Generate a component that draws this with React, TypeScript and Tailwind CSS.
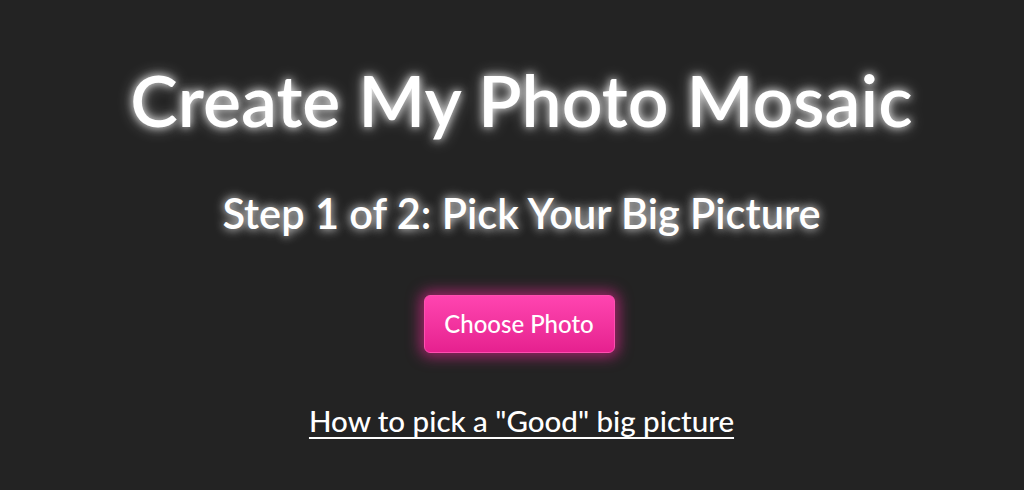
export default function App() {
  return (
    <div className="min-h-screen bg-[#232323] font-['Lato',sans-serif] text-white flex flex-col items-center pl-[19px]">
      <h1 className="mt-[55px] text-[71.6px] leading-[88px] font-semibold [text-shadow:0_0_8px_rgba(255,255,255,0.9),0_0_16px_rgba(255,255,255,0.5)]">
        Create My Photo Mosaic
      </h1>
      <h2 className="mt-[44px] text-[41.5px] leading-[52px] font-semibold [text-shadow:0_0_8px_rgba(255,255,255,0.8),0_0_14px_rgba(255,255,255,0.4)]">
        Step 1 of 2: Pick Your Big Picture
      </h2>
      <button className="mt-[56px] mr-[5px] w-[191px] h-[58px] rounded-md border border-[#ff4fb0] bg-gradient-to-b from-[#ff44b0] to-[#e6208f] text-[24px] font-medium text-white shadow-[0_0_14px_4px_rgba(255,40,160,0.55)]">
        Choose Photo
      </button>
      <a href="#" className="mt-[50px] text-[29.5px] leading-[36px] font-medium underline underline-offset-[5px] decoration-2 text-white">
        How to pick a "Good" big picture
      </a>
    </div>
  );
}
